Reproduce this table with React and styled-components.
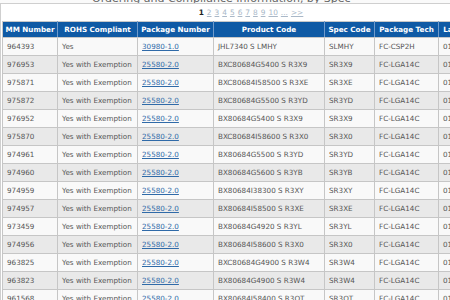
import styled, { createGlobalStyle } from 'styled-components';

const GlobalStyle = createGlobalStyle`
  html, body {
    margin: 0;
    padding: 0;
    background: #fafafa;
    overflow: hidden;
  }
  body {
    font-family: "DejaVu Sans", Verdana, sans-serif;
  }
`;

const Page = styled.div`
  width: 450px;
  height: 300px;
  overflow: hidden;
`;

const Caption = styled.div`
  height: 3px;
  overflow: hidden;
  display: flex;
  align-items: flex-end;
  padding-left: 92px;
  font-size: 11px;
  line-height: 11px;
  color: #666;
`;

const CaptionText = styled.span`
  display: block;
  margin-bottom: -1px;
`;

const Box = styled.div`
  width: 498px;
  border: 1px solid #cfcfcf;
  background: #fff;
  padding: 0 1px 1px;
`;

const Pager = styled.div`
  height: 17px;
  display: flex;
  align-items: center;
  justify-content: center;
  gap: 3px;
  font-size: 7.4px;
`;

const PageLink = styled.a`
  color: ${(p) => (p.$current ? '#222' : '#a9b8c8')};
  font-weight: ${(p) => (p.$current ? 'bold' : 'normal')};
  text-decoration: ${(p) => (p.$current ? 'none' : 'underline')};
`;

const Table = styled.table`
  border-collapse: collapse;
  table-layout: fixed;
  width: 496px;
  font-size: 7.2px;
`;

const HeadCell = styled.th`
  background: #0f5aa5;
  color: #fff;
  font-weight: bold;
  text-align: center;
  white-space: nowrap;
  height: 15px;
  padding: 0;
  border: 1px solid #c8c8c8;
  border-left-color: #6f9acb;
  border-right-color: #6f9acb;
  &:first-child {
    border-left-color: #c8c8c8;
  }
`;

const Row = styled.tr`
  background: ${(p) => (p.$shade ? '#e9e9e9' : '#f9f9f9')};
`;

const Cell = styled.td`
  height: 17px;
  padding: 0 0 0 4px;
  border: 1px solid #c6c6c6;
  color: #555;
  white-space: nowrap;
  overflow: hidden;
`;

const Link = styled.a`
  color: #2f6aa8;
  text-decoration: underline;
`;

const columns = [
  ['MM Number', 55],
  ['ROHS Compliant', 80],
  ['Package Number', 76],
  ['Product Code', 111],
  ['Spec Code', 50],
  ['Package Tech', 64],
  ['Launch Date', 60],
];

const rows = [
  ['964393', 'Yes', '30980-1.0', 'JHL7340 S LMHY', 'SLMHY', 'FC-CSP2H'],
  ['976953', 'Yes with Exemption', '25580-2.0', 'BXC80684G5400 S R3X9', 'SR3X9', 'FC-LGA14C'],
  ['975871', 'Yes with Exemption', '25580-2.0', 'BXC80684I58500 S R3XE', 'SR3XE', 'FC-LGA14C'],
  ['975872', 'Yes with Exemption', '25580-2.0', 'BXC80684G5500 S R3YD', 'SR3YD', 'FC-LGA14C'],
  ['976952', 'Yes with Exemption', '25580-2.0', 'BX80684G5400 S R3X9', 'SR3X9', 'FC-LGA14C'],
  ['975870', 'Yes with Exemption', '25580-2.0', 'BXC80684I58600 S R3X0', 'SR3X0', 'FC-LGA14C'],
  ['974961', 'Yes with Exemption', '25580-2.0', 'BX80684G5500 S R3YD', 'SR3YD', 'FC-LGA14C'],
  ['974960', 'Yes with Exemption', '25580-2.0', 'BX80684G5600 S R3YB', 'SR3YB', 'FC-LGA14C'],
  ['974959', 'Yes with Exemption', '25580-2.0', 'BX80684I38300 S R3XY', 'SR3XY', 'FC-LGA14C'],
  ['974957', 'Yes with Exemption', '25580-2.0', 'BX80684I58500 S R3XE', 'SR3XE', 'FC-LGA14C'],
  ['973459', 'Yes with Exemption', '25580-2.0', 'BX80684G4920 S R3YL', 'SR3YL', 'FC-LGA14C'],
  ['974956', 'Yes with Exemption', '25580-2.0', 'BX80684I58600 S R3X0', 'SR3X0', 'FC-LGA14C'],
  ['963825', 'Yes with Exemption', '25580-2.0', 'BXC80684G4900 S R3W4', 'SR3W4', 'FC-LGA14C'],
  ['963823', 'Yes with Exemption', '25580-2.0', 'BX80684G4900 S R3W4', 'SR3W4', 'FC-LGA14C'],
  ['961568', 'Yes with Exemption', '25580-2.0', 'BX80684I58400 S R3QT', 'SR3QT', 'FC-LGA14C'],
];

const pages = ['1', '2', '3', '4', '5', '6', '7', '8', '9', '10', '...', '>>'];

export default function App() {
  return (
    <Page>
      <GlobalStyle />
      <Caption>
        <CaptionText>Ordering and Compliance Information, by Spec</CaptionText>
      </Caption>
      <Box>
        <Pager>
          {pages.map((p, i) => (
            <PageLink key={p} href="#" $current={i === 0}>
              {p}
            </PageLink>
          ))}
        </Pager>
        <Table>
          <colgroup>
            {columns.map(([name, w]) => (
              <col key={name} style={{ width: w }} />
            ))}
          </colgroup>
          <thead>
            <tr>
              {columns.map(([name]) => (
                <HeadCell key={name}>{name}</HeadCell>
              ))}
            </tr>
          </thead>
          <tbody>
            {rows.map((r, i) => (
              <Row key={r[0]} $shade={i % 2 === 1}>
                <Cell>{r[0]}</Cell>
                <Cell>{r[1]}</Cell>
                <Cell>
                  <Link href="#">{r[2]}</Link>
                </Cell>
                <Cell>{r[3]}</Cell>
                <Cell>{r[4]}</Cell>
                <Cell>{r[5]}</Cell>
                <Cell>01/2018</Cell>
              </Row>
            ))}
          </tbody>
        </Table>
      </Box>
    </Page>
  );
}
